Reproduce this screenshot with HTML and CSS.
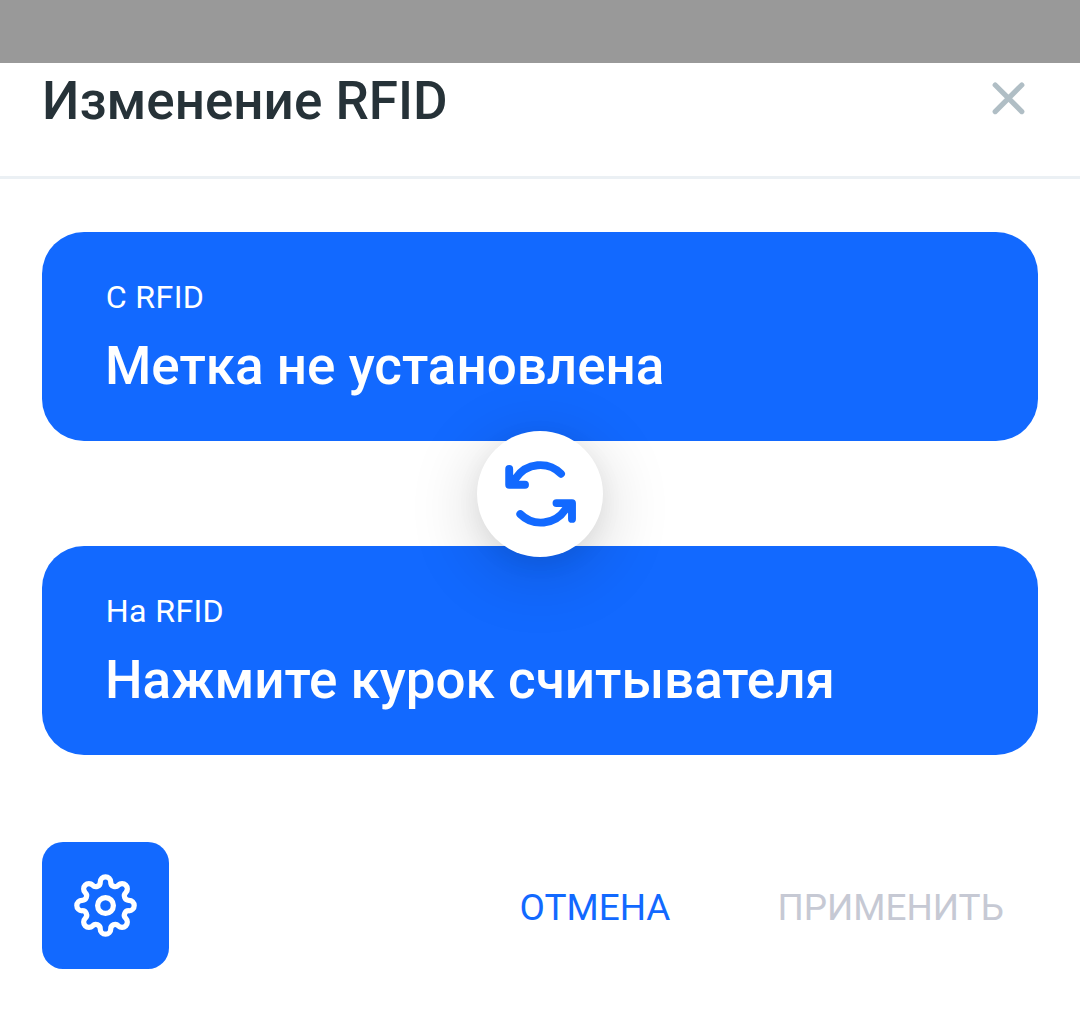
FILE: index.html
```html
<!DOCTYPE html>
<html lang="ru">
<head>
<meta charset="utf-8">
<title>Изменение RFID</title>
<link rel="stylesheet" href="styles.css">
</head>
<body>
<main class="sheet">
  <header class="header">
    <h1 class="title">Изменение RFID</h1>
    <button class="close" aria-label="Закрыть">
      <svg width="34" height="34" viewBox="0 0 34 34"><path d="M3.2 3 29.8 29.6M29.8 3 3.2 29.6"/></svg>
    </button>
  </header>
  <div class="cards">
    <section class="card">
      <p class="label">С RFID</p>
      <p class="value">Метка не установлена</p>
    </section>
    <section class="card">
      <p class="label">На RFID</p>
      <p class="value">Нажмите курок считывателя</p>
    </section>
    <button class="swap" aria-label="Поменять">
      <svg width="126" height="126" viewBox="477 431 126 126">
        <path d="M509.2 469V484.7H525M561 473.7A29.3 29.3 0 0 0 516 478L509.5 484.4"/>
        <path d="M572 518.9V503.1H556.5M520.3 514.1A29.3 29.3 0 0 0 565.2 509.8L571.7 503.4"/>
      </svg>
    </button>
  </div>
  <footer class="footer">
    <button class="settings" aria-label="Настройки">
      <svg width="63" height="63" viewBox="0 0 24 24">
        <path d="M10 3.07A2 2 0 0 1 14 3.07A1.67 1.67 0 0 0 16.9 4.27A2 2 0 0 1 19.73 7.1A1.67 1.67 0 0 0 20.93 10A2 2 0 0 1 20.93 14A1.67 1.67 0 0 0 19.73 16.9A2 2 0 0 1 16.9 19.73A1.67 1.67 0 0 0 14 20.93A2 2 0 0 1 10 20.93A1.67 1.67 0 0 0 7.1 19.73A2 2 0 0 1 4.27 16.9A1.67 1.67 0 0 0 3.07 14A2 2 0 0 1 3.07 10A1.67 1.67 0 0 0 4.27 7.1A2 2 0 0 1 7.1 4.27A1.67 1.67 0 0 0 10 3.07Z"/>
        <circle cx="12" cy="12" r="3"/>
      </svg>
    </button>
    <button class="action">ОТМЕНА</button>
    <button class="action action-disabled" disabled>ПРИМЕНИТЬ</button>
  </footer>
</main>
</body>
</html>
```
FILE: styles.css
```css
* { box-sizing: border-box; }
body {
  margin: 0;
  height: 1014px;
  padding-top: 63px;
  overflow: hidden;
  background: #999;
  font-family: Roboto, "Liberation Sans", sans-serif;
}
button { margin: 0; padding: 0; border: 0; background: none; font: inherit; }
svg { display: block; fill: none; stroke: currentColor; stroke-linecap: round; stroke-linejoin: round; }
h1, p { margin: 0; }
.sheet { height: 951px; background: #fff; }
.header {
  display: flex;
  justify-content: space-between;
  align-items: flex-start;
  height: 116px;
  padding: 2px 54px 0 42px;
  border-bottom: 3px solid #ebf0f4;
}
.title { font-size: 53px; line-height: 72px; font-weight: 500; color: #263238; }
.close { margin-top: 17px; color: #b0bec5; }
.close svg { stroke-width: 5.2; }
.cards {
  position: relative;
  display: flex;
  flex-direction: column;
  gap: 105px;
  padding: 53px 42px 0;
}
.card {
  display: flex;
  flex-direction: column;
  gap: 18px;
  height: 209px;
  padding: 45px 63px 0;
  border-radius: 42px;
  background: #1269ff;
  color: #fff;
}
.label { padding-left: 0.7px; font-size: 32.2px; line-height: 40px; letter-spacing: 0.35px; }
.value { font-size: 53px; line-height: 62px; font-weight: 500; white-space: nowrap; }
.swap {
  position: absolute;
  top: 252px;
  left: 477px;
  width: 126px;
  height: 126px;
  border-radius: 50%;
  background: #fff;
  color: #1269ff;
  box-shadow: 0 14px 70px rgba(0, 0, 0, .18), 0 6px 24px rgba(0, 0, 0, .05);
}
.swap svg { stroke-width: 7.9; }
.footer {
  display: flex;
  align-items: center;
  margin-top: 87px;
  padding: 0 76px 0 42px;
}
.settings {
  display: grid;
  place-items: center;
  width: 127px;
  height: 127px;
  margin-right: auto;
  border-radius: 21px;
  background: #1269ff;
  color: #fff;
}
.settings svg { stroke-width: 2; }
.action { padding-top: 4px; font-size: 36.9px; line-height: 44px; color: #1269ff; }
.action-disabled { margin-left: 107px; color: #c6c9d4; }
```
